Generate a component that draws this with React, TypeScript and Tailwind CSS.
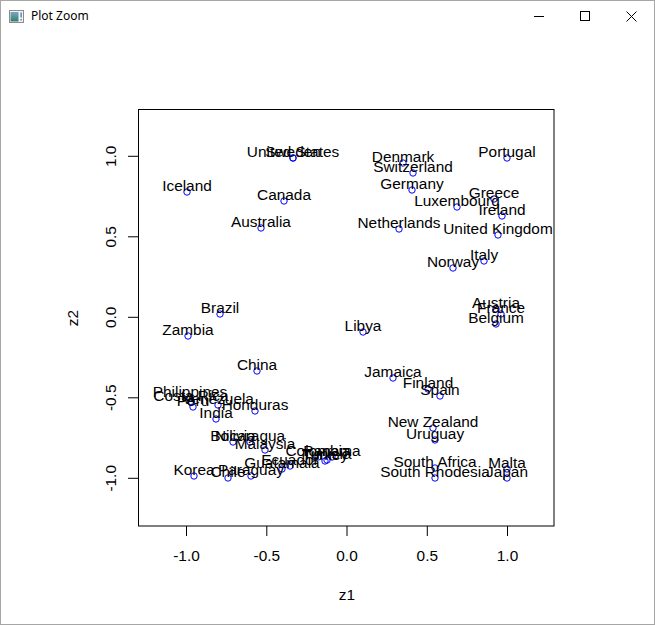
import React from "react";

// label, x, y in page pixels (circle centre; label baseline sits 1px above)
const POINTS: [string, number, number][] = [
  ["United States", 293, 158],
  ["Sweden", 293, 158],
  ["Iceland", 187, 192],
  ["Canada", 284, 201],
  ["Australia", 261, 228],
  ["Denmark", 403, 163],
  ["Switzerland", 413, 173],
  ["Portugal", 507, 158],
  ["Germany", 412, 190],
  ["Greece", 494, 199],
  ["Luxembourg", 457, 207],
  ["Ireland", 502, 216],
  ["Netherlands", 399, 229],
  ["United Kingdom", 498, 235],
  ["Italy", 484, 261],
  ["Norway", 453, 268],
  ["Austria", 496, 309],
  ["France", 501, 314],
  ["Belgium", 496, 324],
  ["Brazil", 220, 314],
  ["Zambia", 188, 336],
  ["Libya", 363, 332],
  ["China", 257, 371],
  ["Jamaica", 393, 378],
  ["Finland", 428, 389],
  ["Spain", 440, 396],
  ["New Zealand", 433, 428],
  ["Uruguay", 435, 440],
  ["South Africa", 435, 468],
  ["South Rhodesia", 435, 478],
  ["Malta", 507, 469],
  ["Japan", 507, 478],
  ["Philippines", 190, 398],
  ["Costa Rica", 191, 402],
  ["Peru", 193, 407],
  ["Venezuela", 218, 405],
  ["Honduras", 255, 411],
  ["India", 216, 419],
  ["Bolivia", 233, 442],
  ["Nicaragua", 250, 442],
  ["Malaysia", 265, 450],
  ["Colombia", 318, 457],
  ["Panama", 332, 457],
  ["Tunisia", 327, 460],
  ["Turkey", 325, 461],
  ["Ecuador", 290, 466],
  ["Guatamala", 282, 469],
  ["Korea", 194, 476],
  ["Paraguay", 251, 476],
  ["Chile", 228, 478],
];

const X_TICKS: [string, number][] = [
  ["-1.0", 186.5],
  ["-0.5", 266.8],
  ["0.0", 347],
  ["0.5", 427.3],
  ["1.0", 507.5],
];

const Y_TICKS: [string, number][] = [
  ["-1.0", 478.3],
  ["-0.5", 397.8],
  ["0.0", 317.3],
  ["0.5", 236.8],
  ["1.0", 156.3],
];

const FONT = "'Liberation Sans', Arial, sans-serif";

function TitleIcon() {
  return (
    <svg width="15" height="13" viewBox="0 0 15 13">
      <defs>
        <linearGradient id="tg" x1="0" y1="0" x2="0" y2="1">
          <stop offset="0" stopColor="#7aa7c4" />
          <stop offset="1" stopColor="#2f7f6a" />
        </linearGradient>
      </defs>
      <rect x="0.5" y="0.5" width="14" height="12" fill="#f2f2f2" stroke="#8c8c8c" />
      <rect x="1.5" y="2" width="8" height="9.5" fill="url(#tg)" />
      <rect x="11.5" y="2.5" width="1.2" height="5" fill="#3a6fb0" />
      <rect x="11.5" y="9" width="1.2" height="1.5" fill="#3a6fb0" />
    </svg>
  );
}

function WindowControls() {
  return (
    <div className="flex items-center h-full">
      <div className="w-[46px] h-full flex items-center justify-center">
        <svg width="10" height="10" viewBox="0 0 10 10">
          <line x1="0" y1="5.5" x2="10" y2="5.5" stroke="#000" strokeWidth="1" />
        </svg>
      </div>
      <div className="w-[46px] h-full flex items-center justify-center">
        <svg width="10" height="10" viewBox="0 0 10 10">
          <rect x="0.5" y="0.5" width="9" height="9" fill="none" stroke="#000" strokeWidth="1" />
        </svg>
      </div>
      <div className="w-[46px] h-full flex items-center justify-center">
        <svg width="11" height="11" viewBox="0 0 11 11">
          <path d="M0.5 0.5 L10.5 10.5 M10.5 0.5 L0.5 10.5" stroke="#000" strokeWidth="1" />
        </svg>
      </div>
    </div>
  );
}

function Plot() {
  return (
    <svg width="653" height="593" viewBox="1 31 653 593" className="block">
      {/* plot box */}
      <rect x="138.5" y="109.5" width="415.5" height="416.5" fill="none" stroke="#000" strokeWidth="1" />

      {/* x axis */}
      {X_TICKS.map(([t, x]) => (
        <g key={"x" + t}>
          <line x1={x} y1={526} x2={x} y2={536} stroke="#000" strokeWidth="1" />
          <text x={x} y={561} textAnchor="middle" fontFamily={FONT} fontSize="15.4" fill="#000">
            {t}
          </text>
        </g>
      ))}
      <text x={347} y={600} textAnchor="middle" fontFamily={FONT} fontSize="15.4" fill="#000">
        z1
      </text>

      {/* y axis */}
      {Y_TICKS.map(([t, y]) => (
        <g key={"y" + t}>
          <line x1={128} y1={y} x2={138.5} y2={y} stroke="#000" strokeWidth="1" />
          <text
            x={116}
            y={y}
            transform={`rotate(-90 116 ${y})`}
            textAnchor="middle"
            fontFamily={FONT}
            fontSize="15.4"
            fill="#000"
          >
            {t}
          </text>
        </g>
      ))}
      <text x={78} y={318} transform="rotate(-90 78 318)" textAnchor="middle" fontFamily={FONT} fontSize="15.4" fill="#000">
        z2
      </text>

      {/* points */}
      {POINTS.map(([name, x, y]) => (
        <circle key={"c" + name} cx={x} cy={y} r="3.2" fill="none" stroke="#0000ff" strokeWidth="1" />
      ))}
      {POINTS.map(([name, x, y]) => (
        <text key={"t" + name} x={x} y={y - 1} textAnchor="middle" fontFamily={FONT} fontSize="15.4" fill="#000">
          {name}
        </text>
      ))}
    </svg>
  );
}

export default function App() {
  return (
    <div className="w-[655px] h-[625px] bg-white border border-[#a6a6a6] flex flex-col overflow-hidden">
      <div className="h-[30px] flex items-center justify-between shrink-0">
        <div className="flex items-center gap-[7px] pl-[8px]">
          <TitleIcon />
          <span className="text-[12px] text-black leading-none" style={{ fontFamily: "'Noto Sans', 'Liberation Sans', sans-serif" }}>
            Plot Zoom
          </span>
        </div>
        <WindowControls />
      </div>
      <div className="flex-1">
        <Plot />
      </div>
    </div>
  );
}
